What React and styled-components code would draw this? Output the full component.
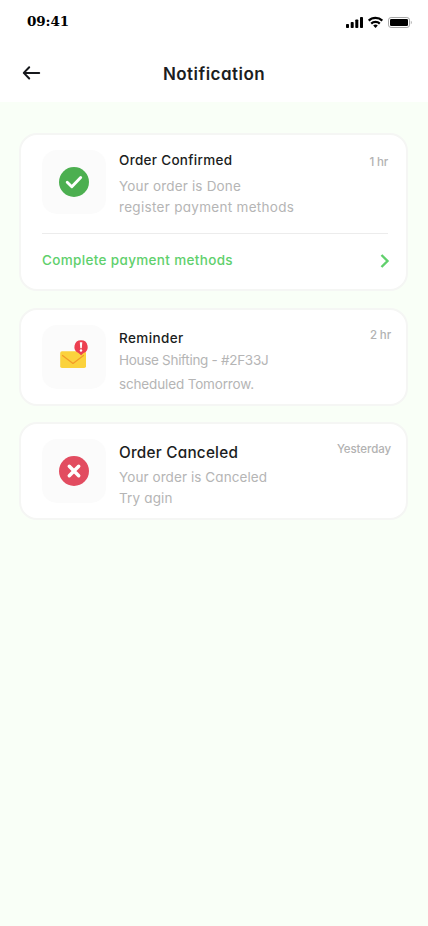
import React from "react";
import styled, { createGlobalStyle } from "styled-components";

const GlobalStyle = createGlobalStyle`
  * {
    box-sizing: border-box;
  }
  body {
    margin: 0;
    background-color: #f9fff7;
    font-family: "Inter", sans-serif;
    font-feature-settings: "cv11", "calt" 0;
  }
  h1, h2, p {
    margin: 0;
  }
`;

const Screen = styled.div`
  width: 428px;
  min-height: 926px;
  background-color: #f9fff7;
`;

const Header = styled.header`
  height: 102px;
  background-color: #ffffff;
`;

const StatusBar = styled.div`
  display: flex;
  justify-content: space-between;
  height: 44px;
  padding: 13px 16px 0 27px;
`;

const Clock = styled.span`
  font-family: "DejaVu Serif", serif;
  font-weight: bold;
  font-size: 13.5px;
  line-height: 16px;
  letter-spacing: -0.1px;
  color: #000000;
`;

const StatusIcons = styled.svg`
  width: 66px;
  height: 12px;
  margin-top: 3px;
`;

const TitleBar = styled.div`
  display: grid;
  grid-template-columns: 20px 1fr 20px;
  align-items: center;
  height: 58px;
  padding: 0 22px;
`;

const BackButton = styled.button`
  display: flex;
  padding: 0;
  border: none;
  background: none;
`;

const Title = styled.h1`
  padding-top: 2px;
  text-align: center;
  font-size: 17px;
  font-weight: 600;
  line-height: 24px;
  letter-spacing: ${(props) => props.$spacing}px;
  color: #1b1d21;
`;

const List = styled.main`
  display: flex;
  flex-direction: column;
  padding: 31px 20px 0 19px;
`;

const Card = styled.article`
  height: ${(props) => props.$height}px;
  margin-bottom: ${(props) => props.$gap || 0}px;
  padding: 15px 15px 0 21px;
  border: 2px solid #f5f6f4;
  border-radius: 18px;
  background-color: #ffffff;
`;

const CardBody = styled.div`
  display: flex;
  height: 64px;
`;

const IconBox = styled.div`
  display: flex;
  align-items: center;
  justify-content: center;
  width: 64px;
  height: 64px;
  margin-right: 13px;
  border-radius: 15px;
  background-color: #fbfbfb;
`;

const Content = styled.div`
  flex: 1;
  padding-top: ${(props) => props.$top}px;
  white-space: nowrap;
`;

const Heading = styled.h2`
  margin-bottom: ${(props) => props.$gap}px;
  font-size: ${(props) => props.$size || 13.5}px;
  font-weight: 500;
  line-height: 20px;
  letter-spacing: ${(props) => props.$spacing || 0}px;
  color: #1b1d21;
`;

const Line = styled.p`
  font-size: 13.5px;
  font-weight: 400;
  line-height: ${(props) => props.$height || 21}px;
  letter-spacing: ${(props) => props.$spacing || 0}px;
  color: #b5b5b5;
`;

const Time = styled.span`
  margin-top: ${(props) => props.$top}px;
  margin-right: ${(props) => props.$right || 0}px;
  font-size: 11.5px;
  font-weight: 500;
  line-height: 16px;
  letter-spacing: ${(props) => props.$spacing || 0}px;
  font-feature-settings: normal;
  color: #b2b2b2;
`;

const Action = styled.div`
  display: flex;
  align-items: center;
  justify-content: space-between;
  height: 54px;
  margin: 19px 3px 0 0;
  padding-bottom: 2px;
  border-top: 1px solid #ececec;
`;

const ActionLink = styled.span`
  font-size: 13.5px;
  font-weight: 500;
  line-height: 20px;
  letter-spacing: ${(props) => props.$spacing}px;
  color: #60d06c;
`;

const Chevron = styled.svg`
  margin-top: 2px;
  margin-right: -2px;
`;

const BackArrow = () => (
  <svg width="20" height="16" viewBox="0 0 20 16" fill="none" stroke="#16181c" strokeWidth="2">
    <path d="M7.2 2.2 1.8 7.9l5.4 5.6M1.8 7.9h15.4" strokeLinecap="round" strokeLinejoin="round" />
  </svg>
);

const StatusGlyphs = () => (
  <StatusIcons viewBox="0 0 66 12">
    <rect x="0" y="8" width="3" height="4" rx="0.8" />
    <rect x="4.7" y="6" width="3" height="6" rx="0.8" />
    <rect x="9.3" y="3.5" width="3" height="8.5" rx="0.8" />
    <rect x="14" y="1" width="3" height="11" rx="0.8" />
    <g fill="none" stroke="#000000" strokeWidth="2.2">
      <path d="M22.7 4.6a9.7 9.7 0 0 1 13.6 0" />
      <path d="M25.2 7.6a6.1 6.1 0 0 1 8.6 0" />
    </g>
    <path d="m29.5 12-2.3-2.4a3.2 3.2 0 0 1 4.6 0z" />
    <rect x="42.5" y="1.5" width="21" height="10" rx="2.6" fill="none" stroke="#a6a6a6" />
    <rect x="44" y="3" width="18" height="7" rx="1.3" />
    <path d="M64.8 4.7c1.3.5 1.3 3.1 0 3.6z" fill="#a6a6a6" />
  </StatusIcons>
);

const ConfirmedIcon = () => (
  <svg width="30" height="30" viewBox="0 0 30 30" fill="none">
    <circle cx="15" cy="15" r="15" fill="#4caf50" />
    <path
      d="m8.2 15.3 4.6 4.5 8.9-9.2"
      stroke="#ffffff"
      strokeWidth="2.9"
      strokeLinecap="round"
      strokeLinejoin="round"
    />
  </svg>
);

const CanceledIcon = () => (
  <svg width="30" height="30" viewBox="0 0 30 30" fill="none">
    <circle cx="15" cy="15" r="15" fill="#e24c60" />
    <path d="m10.3 10.3 9.4 9.4m0-9.4-9.4 9.4" stroke="#ffffff" strokeWidth="3.5" strokeLinecap="round" />
  </svg>
);

const ReminderIcon = () => (
  <svg width="30" height="34" viewBox="0 0 30 34" fill="none">
    <rect x="1.2" y="11.3" width="25.8" height="16.7" rx="1.8" fill="#fbd23c" />
    <path d="m3.5 15.5 10.5 8 10.5-8" stroke="#f39a27" strokeWidth="1.2" strokeLinecap="round" strokeLinejoin="round" />
    <path d="M22.1.3a6.6 6.6 0 0 1 2.5 12.7l-2.5 2.3-2.6-2.3A6.6 6.6 0 0 1 22.1.3z" fill="#ec3f50" />
    <path d="M20.8 2.3h2.5l-.5 6h-1.5z" fill="#ffffff" />
    <circle cx="22" cy="10.5" r="1.2" fill="#ffffff" />
  </svg>
);

function App() {
  return (
    <Screen>
      <GlobalStyle />
      <Header>
        <StatusBar>
          <Clock>09:41</Clock>
          <StatusGlyphs />
        </StatusBar>
        <TitleBar>
          <BackButton aria-label="Back">
            <BackArrow />
          </BackButton>
          <Title $spacing={0.47}>Notification</Title>
        </TitleBar>
      </Header>
      <List>
        <Card $height={158} $gap={17}>
          <CardBody>
            <IconBox>
              <ConfirmedIcon />
            </IconBox>
            <Content $top={0}>
              <Heading $gap={6} $spacing={0.3}>
                Order Confirmed
              </Heading>
              <Line $spacing={0.17}>Your order is Done</Line>
              <Line $spacing={0.3}>register payment methods</Line>
            </Content>
            <Time $top={4} $right={3} $spacing={-0.2}>
              1 hr
            </Time>
          </CardBody>
          <Action>
            <ActionLink $spacing={0.34}>Complete payment methods</ActionLink>
            <Chevron width="10" height="16" viewBox="0 0 10 16" fill="none">
              <path d="m1.5 2 6 6-6 6" stroke="#60d06c" strokeWidth="2.4" />
            </Chevron>
          </Action>
        </Card>
        <Card $height={98} $gap={16}>
          <CardBody>
            <IconBox>
              <ReminderIcon />
            </IconBox>
            <Content $top={3}>
              <Heading $gap={0} $spacing={0.4}>
                Reminder
              </Heading>
              <Line $height={24} $spacing={-0.3}>
                House Shifting - #2F33J
              </Line>
              <Line $height={24} $spacing={-0.15}>
                scheduled Tomorrow.
              </Line>
            </Content>
            <Time $top={2} $spacing={-0.1}>
              2 hr
            </Time>
          </CardBody>
        </Card>
        <Card $height={98}>
          <CardBody>
            <IconBox>
              <CanceledIcon />
            </IconBox>
            <Content $top={4}>
              <Heading $gap={4} $size={15.3} $spacing={0.24}>
                Order Canceled
              </Heading>
              <Line $spacing={0.08}>Your order is Canceled</Line>
              <Line $spacing={0.15}>Try agin</Line>
            </Content>
            <Time $top={2} $spacing={-0.08}>
              Yesterday
            </Time>
          </CardBody>
        </Card>
      </List>
    </Screen>
  );
}

export default App;
